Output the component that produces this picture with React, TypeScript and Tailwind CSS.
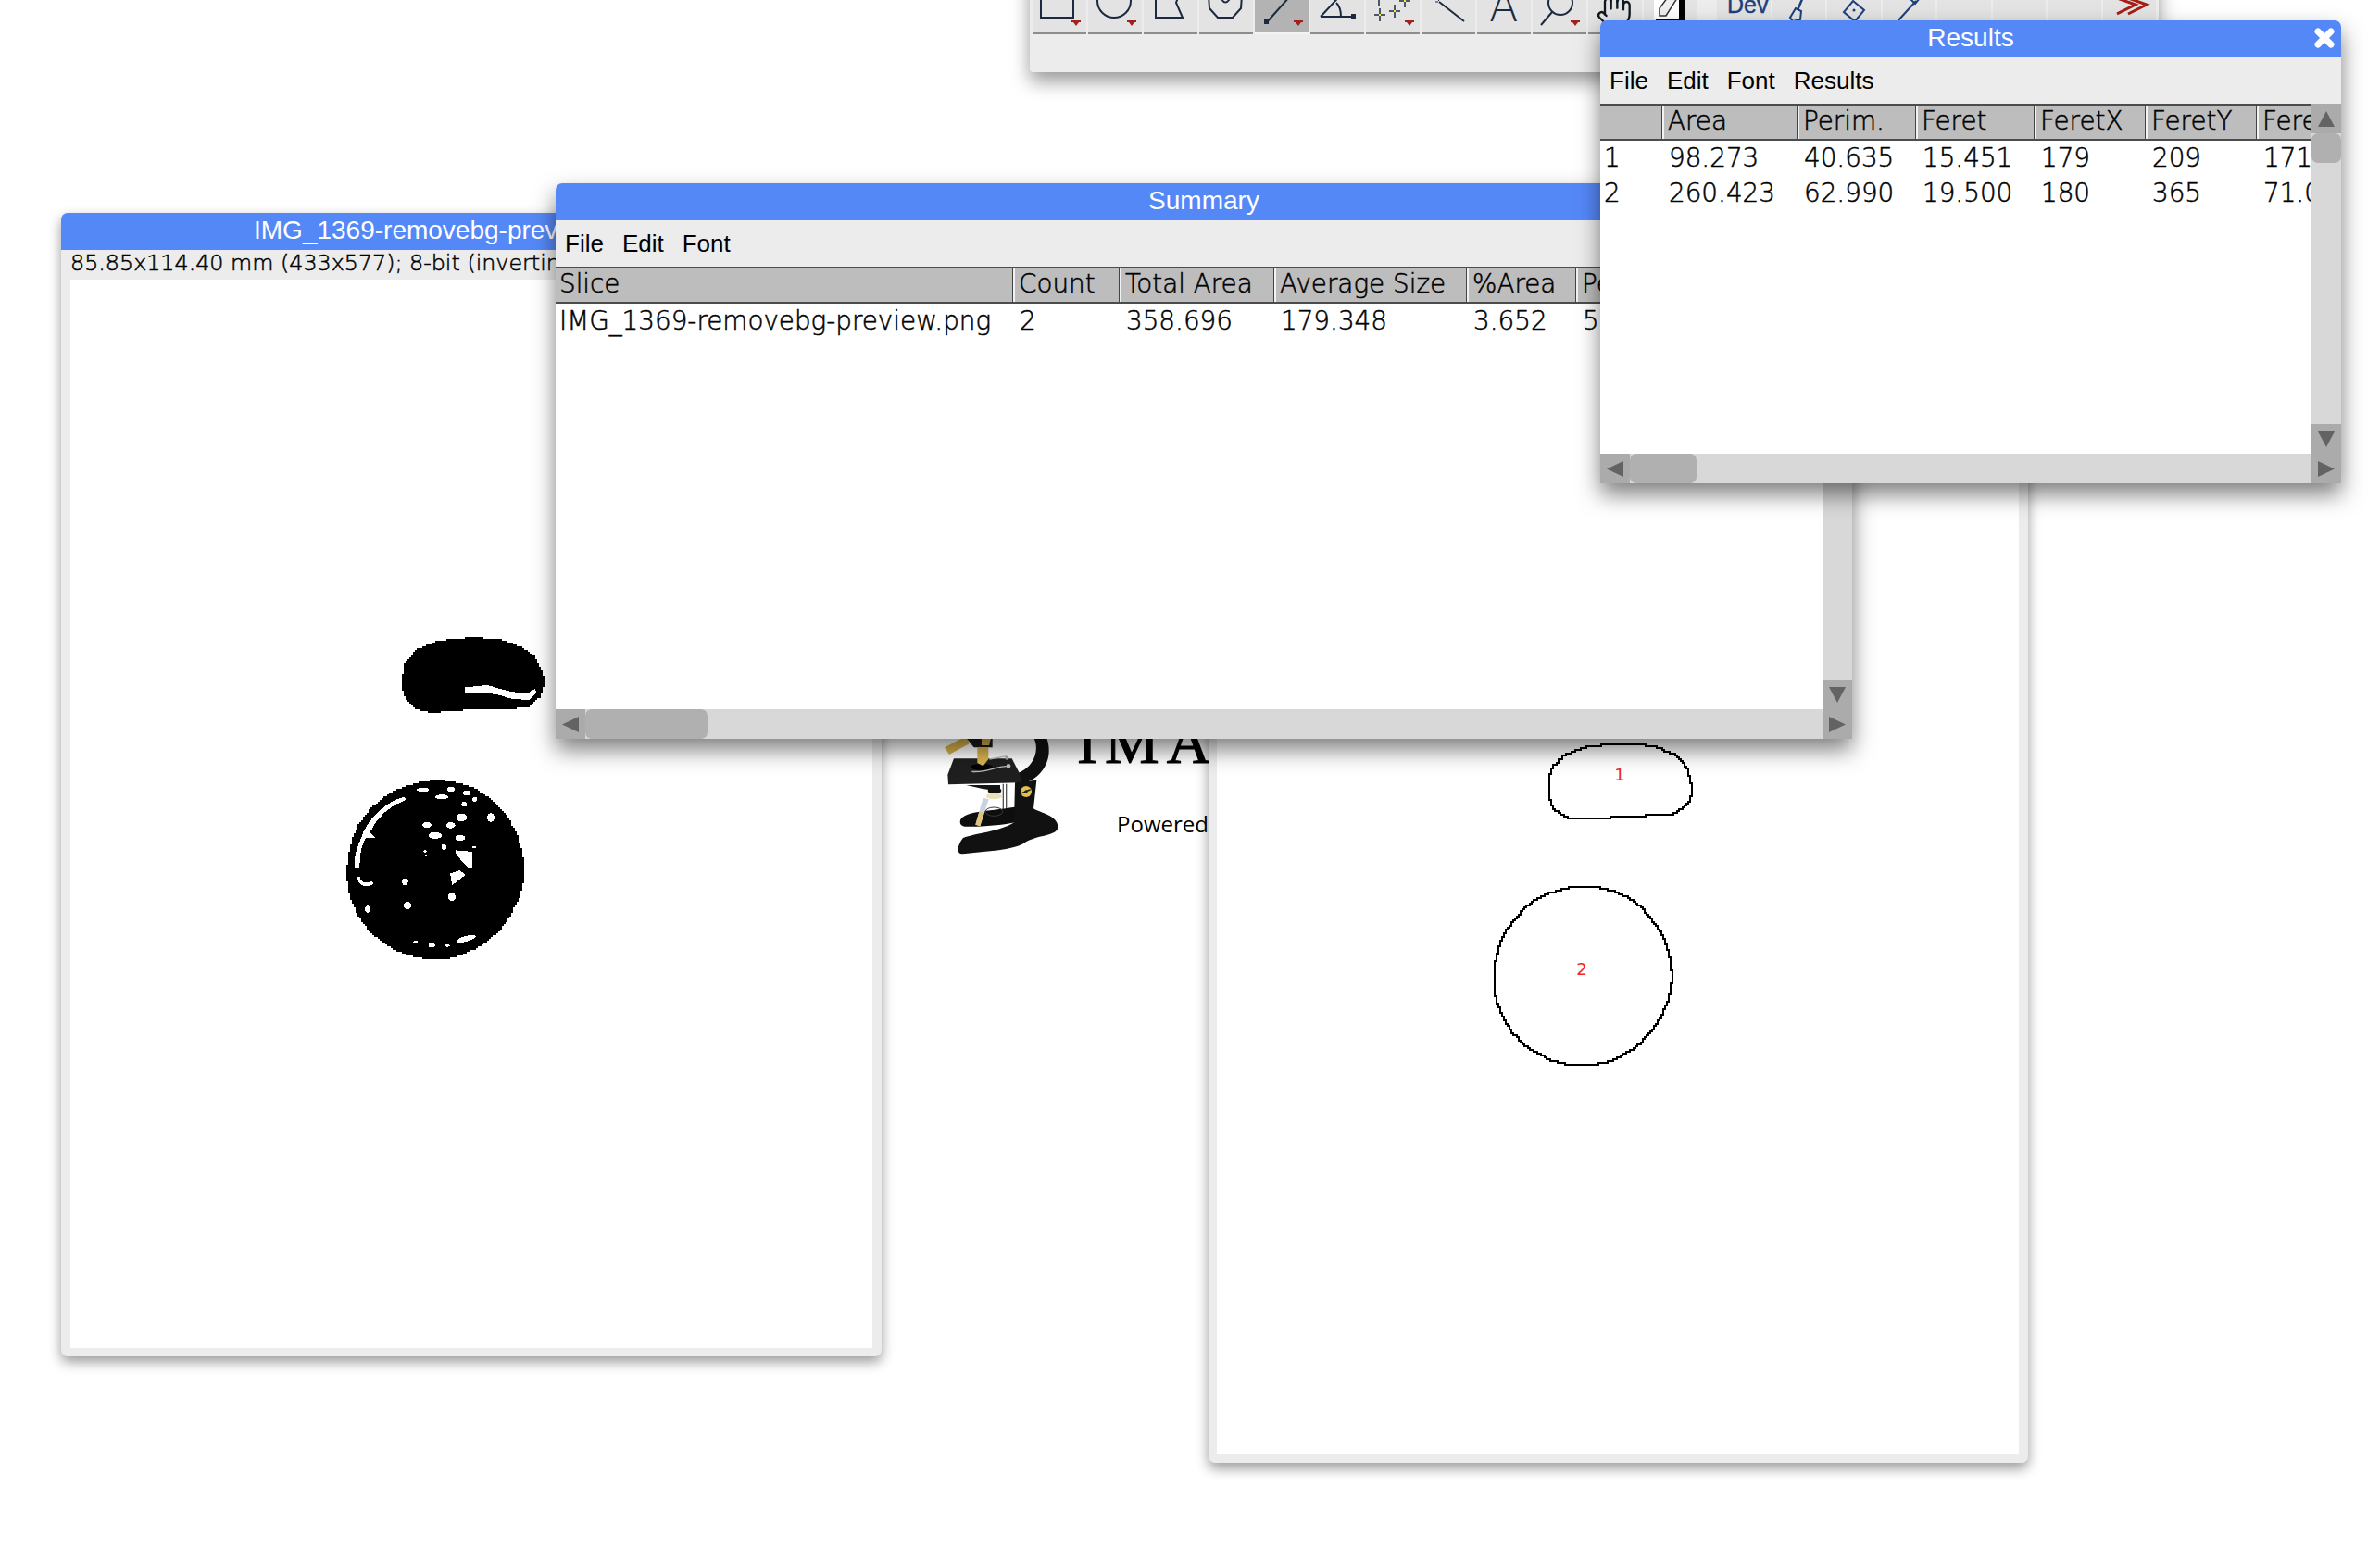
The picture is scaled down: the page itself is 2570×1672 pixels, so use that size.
import React from "react";
import { Hand } from "lucide-react";

const INK = "#1b2a40";
const NAVY = "#1c3f7c";

function RedArrow({ x }: { x: number }) {
  return <path d={`M${x - 5} 47h10v2l-2 0-3 4-3-4-2 0z`} fill="#a32020" />;
}

function Cross({ x, y }: { x: number; y: number }) {
  return (
    <g>
      <path d={`M${x - 6} ${y}h12M${x} ${y - 7}v14`} stroke={INK} strokeWidth="1.5" fill="none" />
      <rect x={x - 1} y={y - 1} width="2" height="2" fill="#f5f020" />
    </g>
  );
}

const icons: React.ReactNode[] = [
  <g key="r"><rect x="9" y="14" width="35" height="30" stroke={INK} strokeWidth="2" fill="none" /><RedArrow x={47} /></g>,
  <g key="o"><circle cx="28" cy="26" r="18" stroke={INK} strokeWidth="2" fill="none" /><RedArrow x={47} /></g>,
  <path key="p" d="M13 12L13 44L42 44L35 28L40 14" stroke={INK} strokeWidth="2" fill="none" />,
  <path key="f" d="M10 20L11 34L20 44L36 44L45 34L46 20M23 22Q28 33 34 22" stroke={INK} strokeWidth="2" fill="none" />,
  <g key="l"><path d="M13 49L46 12" stroke={INK} strokeWidth="2" fill="none" /><rect x="10" y="46" width="5" height="5" fill={INK} /><RedArrow x={47} /></g>,
  <g key="a"><path d="M11 43L47 43M11 43L38 14M28 28Q33 33 33 43" stroke={INK} strokeWidth="2" fill="none" /><rect x="44" y="40" width="5" height="5" fill={INK} /></g>,
  <g key="pt"><Cross x={15} y={41} /><Cross x={31} y={37} /><Cross x={42} y={26} /><Cross x={14} y={24} /><RedArrow x={47} /></g>,
  <g key="w"><path d="M19 27L46 48" stroke={INK} strokeWidth="2" fill="none" /><path d="M17 24l2 2M20 22l1 3M15 27l3 0" stroke={INK} strokeWidth="1" fill="none" /></g>,
  <text key="t" x="13" y="48" fontSize="46" fill={INK} fontFamily="'DejaVu Sans', sans-serif" fontWeight="200">A</text>,
  <g key="m"><circle cx="30" cy="28" r="13" stroke={INK} strokeWidth="2" fill="none" /><path d="M21 38L9 52" stroke={INK} strokeWidth="2" fill="none" /><RedArrow x={46} /></g>,
  <foreignObject key="h" x="8" y="17" width="42" height="42"><Hand size={40} strokeWidth={1.4} color="#101820" /></foreignObject>,
  <g key="c"><rect x="11" y="10" width="27" height="36" fill="#fff" /><path d="M38 8h6v40H13v-2h25z" fill="#000" /><path d="M17 42L17 34L32 14L38 20L24 42Z" stroke="#333" strokeWidth="1.5" fill="#eee" /></g>,
];

const icons2: React.ReactNode[] = [
  <text key="d" x="11" y="39" fontSize="25" stroke={NAVY} strokeWidth="0.4" fill={NAVY} fontFamily="'Liberation Sans', sans-serif">Dev</text>,
  <g key="b"><path d="M38 10L27 36" stroke={NAVY} strokeWidth="2.5" fill="none" /><path d="M25 34l6 3 -1 9 -8 2 -3-4 z" fill="none" stroke={NAVY} strokeWidth="2" /></g>,
  <g key="pn"><path d="M28 26L40 36L30 48L18 38Z" stroke={NAVY} strokeWidth="2" fill="none" /><circle cx="29" cy="36" r="1.5" fill={NAVY} /></g>,
  <g key="dp"><path d="M16 48L36 26" stroke={NAVY} strokeWidth="2" fill="none" /><path d="M35 18l5 5-5 6-5-5z" stroke={NAVY} strokeWidth="2" fill="none" /></g>,
  null,
  null,
  null,
  <path key="ch" d="M15 23L35 30L15 40M27 23L47 30L27 40" stroke="#a32018" strokeWidth="3" fill="none" />,
];

function ToolButton({ icon, active, narrow }: { icon: React.ReactNode; active?: boolean; narrow?: boolean }) {
  return (
    <div
      className={`h-[62px] shrink-0 border-b-2 ${narrow ? "w-[57.5px]" : "w-[58px]"} ${
        active ? "bg-[#b3b3b3] border-[#f4f4f4]" : "bg-[#e3e3e3] border-[#8d8d8d]"
      }`}
    >
      <svg width="58" height="60" viewBox="0 0 58 60">
        {icon}
      </svg>
    </div>
  );
}

function Toolbar() {
  return (
    <div className="absolute left-[1112px] top-[-30px] w-[1219px] h-[108px] bg-[#ececec] rounded-b-[4px] shadow-[0_10px_20px_rgba(0,0,0,0.4)] pl-[3px] pt-[5px] flex">
      <div className="flex gap-[2px]">
        {icons.map((ic, i) => (
          <ToolButton key={i} icon={ic} active={i === 4} />
        ))}
      </div>
      <div className="flex gap-[2px] ml-[21px]">
        {icons2.map((ic, i) => (
          <ToolButton key={i} icon={ic} narrow />
        ))}
      </div>
    </div>
  );
}

function TitleBar({ children, close }: { children: React.ReactNode; close?: boolean }) {
  return (
    <div className="relative h-[40px] shrink-0 pb-[3px] bg-[#5588f7] rounded-t-[7px] flex items-center justify-center text-white text-[28px] leading-none font-['Liberation_Sans',sans-serif] whitespace-nowrap overflow-hidden">
      {children}
      {close && (
        <svg className="absolute right-[7px] top-[8px]" width="22" height="22" viewBox="0 0 22 22">
          <path d="M4 4L18 18M18 4L4 18" stroke="#fff" strokeWidth="7" strokeLinecap="round" />
        </svg>
      )}
    </div>
  );
}

function Menu({ items, pad }: { items: string[]; pad: string }) {
  return (
    <div className={`h-[50px] shrink-0 bg-[#ececec] flex items-center gap-[20px] text-[26px] text-black font-['Liberation_Sans',sans-serif] ${pad}`}>
      {items.map((m) => (
        <span key={m}>{m}</span>
      ))}
    </div>
  );
}

function Tri({ dir }: { dir: "up" | "down" | "left" | "right" }) {
  const d = {
    up: "M9 0L18 17H0Z",
    down: "M0 0H18L9 17Z",
    left: "M18 0V17L0 8.5Z",
    right: "M0 0V17L18 8.5Z",
  }[dir];
  return (
    <svg width="18" height="17" viewBox="0 0 18 17">
      <path d={d} fill="#636363" />
    </svg>
  );
}

function ScrollBtn({ dir }: { dir: "up" | "down" | "left" | "right" }) {
  return (
    <div className="w-[32px] h-[32px] shrink-0 bg-[#ababab] flex items-center justify-center">
      <Tri dir={dir} />
    </div>
  );
}

type Col = { w: number; head: string; cells: string[] };

function Table({ cols }: { cols: Col[] }) {
  const rows = cols[0].cells.length;
  return (
    <div className="flex-1 min-w-0 overflow-hidden bg-white font-['DejaVu_Sans',sans-serif] font-extralight [-webkit-text-stroke:0.5px_black] text-[27.8px] text-black leading-[38px] whitespace-nowrap">
      <div className="flex h-[40px] border-y-2 border-[#4c4c4c] bg-[#bdbdbd] w-max items-center">
        {cols.map((c, i) => (
          <div
            key={i}
            style={{ width: c.w }}
            className="h-full shrink-0 overflow-hidden pl-[4px] border-r-2 border-r-[#f2f2f2] shadow-[inset_-1px_0_0_#444] leading-[33px]"
          >
            {c.head}
          </div>
        ))}
      </div>
      {Array.from({ length: rows }).map((_, r) => (
        <div key={r} className="flex w-max">
          {cols.map((c, i) => (
            <div key={i} style={{ width: c.w }} className={`shrink-0 h-[38px] ${i === 0 ? "pl-[4px]" : "pl-[5px]"}`}>
              {c.cells[r]}
            </div>
          ))}
        </div>
      ))}
    </div>
  );
}

function TableWindow({
  className,
  title,
  menu,
  menuPad,
  cols,
  close,
  thumbW,
  thumbY,
}: {
  className: string;
  title: string;
  menu: string[];
  menuPad: string;
  cols: Col[];
  close?: boolean;
  thumbW: number;
  thumbY?: boolean;
}) {
  return (
    <div className={`absolute flex flex-col rounded-t-[7px] shadow-[0_12px_24px_rgba(0,0,0,0.5)] ${className}`}>
      <TitleBar close={close}>{title}</TitleBar>
      <Menu items={menu} pad={menuPad} />
      <div className="flex flex-1 min-h-0">
        <Table cols={cols} />
        <div className="w-[32px] shrink-0 bg-[#d8d8d8] flex flex-col">
          <ScrollBtn dir="up" />
          {thumbY && <div className="w-[32px] h-[32px] bg-[#b0b0b0] rounded-[7px] shrink-0" />}
          <div className="flex-1" />
          <ScrollBtn dir="down" />
        </div>
      </div>
      <div className="flex h-[32px] shrink-0 bg-[#d8d8d8]">
        <ScrollBtn dir="left" />
        <div style={{ width: thumbW }} className="h-[32px] bg-[#b0b0b0] rounded-[7px]" />
        <div className="flex-1" />
        <ScrollBtn dir="right" />
      </div>
    </div>
  );
}

/* turns a closed outline into a stair-stepped one, on a grid of `g` units */
function stepped(pts: [number, number][], g: number) {
  const q = (v: number) => Math.round(v / g) * g;
  let px = q(pts[0][0]);
  let py = q(pts[0][1]);
  let d = `M${px} ${py}`;
  for (let i = 1; i < pts.length; i++) {
    const x = q(pts[i][0]);
    const y = q(pts[i][1]);
    if (x !== px) d += `H${x}`;
    if (y !== py) d += `V${y}`;
    px = x;
    py = y;
  }
  return d + "Z";
}

function wobble(cx: number, cy: number, rx: number, ry: number, amt: number) {
  const pts: [number, number][] = [];
  for (let i = 0; i < 240; i++) {
    const a = (i / 240) * Math.PI * 2;
    const r = 1 + amt * (Math.sin(a * 5 + 1) * 0.6 + Math.sin(a * 11) * 0.4);
    pts.push([cx + rx * r * Math.cos(a), cy + ry * r * Math.sin(a)]);
  }
  return pts;
}

function dense(one: [number, number][]) {
  const out: [number, number][] = [];
  one.forEach((p, i) => {
    if (i === 0) return;
    const a = one[i - 1];
    for (let t = 0; t < 8; t++) out.push([a[0] + ((p[0] - a[0]) * t) / 8, a[1] + ((p[1] - a[1]) * t) / 8]);
  });
  return out;
}

function BinaryImage() {
  const spots: [number, number, number, number][] = [
    [330, 572, 40, 14], [428, 570, 26, 16], [480, 582, 24, 16], [390, 595, 42, 15], [510, 602, 16, 16],
    [475, 618, 18, 16], [458, 656, 34, 26], [558, 655, 24, 28], [348, 684, 30, 18], [425, 684, 30, 20],
    [368, 716, 44, 22], [455, 726, 32, 18], [410, 755, 16, 18], [510, 762, 14, 6], [352, 775, 10, 8],
    [352, 788, 14, 6], [282, 866, 20, 22], [432, 912, 24, 28], [288, 942, 24, 24], [162, 955, 18, 22],
    [318, 1068, 16, 8], [368, 1076, 22, 14], [420, 1080, 18, 8],
  ];
  const bean: [number, number][] = [
    [282, 215], [290, 170], [325, 125], [385, 100], [440, 90], [510, 85], [600, 92], [665, 115], [712, 150],
    [738, 195], [744, 240], [730, 280], [695, 312], [640, 316], [500, 318], [450, 326], [370, 328], [325, 315],
    [295, 285], [282, 250], [282, 215],
  ];
  return (
    <svg width="866" height="1154" viewBox="0 0 866 1154" className="block">
      <g transform="translate(264 358) scale(0.33333)" shapeRendering="crispEdges">
        <path d={stepped(dense(bean), 6)} fill="#000" />
        <path d="M487 247L560 240L600 252L640 262L690 265L715 252L716 265L695 288L640 285L590 270L540 265L487 263Z" fill="#fff" />
        <path d={stepped(wobble(390, 838, 287, 290, 0.006), 6)} fill="#000" />
        <path d="M290 602C230 615 165 680 150 735C135 770 125 800 128 832L145 832C145 790 150 760 165 735L195 735L178 718C200 670 240 630 295 612Z" fill="#fff" />
        <path d="M135 860C140 890 165 900 190 885L185 875C165 885 150 880 145 860Z" fill="#fff" />
        {spots.map(([x, y, w, h], i) => (
          <ellipse key={i} cx={x + w / 2} cy={y + h / 2} rx={w / 2} ry={h / 2} fill="#fff" />
        ))}
        <path d="M456 775L510 780L510 830L495 830L458 790Z" fill="#fff" />
        <path d="M438 850L470 840L488 855L445 888Z" fill="#fff" />
        <ellipse cx="490" cy="1062" rx="32" ry="9" transform="rotate(-15 490 1062)" fill="#fff" />
      </g>
    </svg>
  );
}

function OutlineImage() {
  const one: [number, number][] = [
    [278, 345], [290, 320], [325, 285], [385, 262], [475, 250], [555, 250], [625, 262], [690, 292],
    [725, 335], [740, 400], [730, 440], [680, 482], [495, 484], [460, 492], [360, 494], [330, 488],
    [295, 465], [278, 430], [278, 345],
  ];
  return (
    <svg width="866" height="1154" viewBox="0 0 866 1154" className="block">
      <g transform="translate(266 304) scale(0.33333)" shapeRendering="crispEdges">
        <path d={stepped(dense(one), 6)} transform="translate(3 0)" fill="none" stroke="#000" strokeWidth="6" />
        <path d={stepped(wobble(387, 1002, 288, 290, 0.005), 6)} fill="none" stroke="#000" strokeWidth="6" />
      </g>
      <text x="435" y="427" fontSize="18" fill="#ee2a2a" textAnchor="middle" fontFamily="'DejaVu Sans', sans-serif">1</text>
      <text x="394" y="637" fontSize="18" fill="#ee2a2a" textAnchor="middle" fontFamily="'DejaVu Sans', sans-serif">2</text>
    </svg>
  );
}

function Microscope() {
  return (
    <svg width="340" height="220" viewBox="0 0 1020 660" className="block">
      <path d="M120 262L190 225L200 250L135 285Z" fill="#d8b24a" />
      <path d="M185 225H275V262H215Z" fill="#1a1a1a" />
      <path d="M240 225H272L264 255H240Z" fill="#d8b24a" />
      <path d="M405 225C428 255 420 320 358 345L365 378C420 375 460 320 458 270C458 255 455 240 448 225Z" fill="#111" />
      <path d="M150 298H338L365 350V376L132 382L130 350Z" fill="#1f1f1f" />
      <ellipse cx="240" cy="325" rx="36" ry="10" fill="#000" />
      <path d="M226 262H262L262 300L245 322L226 312Z" fill="#d9b550" />
      <path d="M265 300L322 290M208 340C260 345 280 322 332 322" stroke="#b9b9b9" strokeWidth="4" fill="none" />
      <circle cx="322" cy="296" r="6" fill="#aaa" />
      <circle cx="327" cy="322" r="7" fill="#bbb" />
      <path d="M190 384L300 384L300 405L240 395Z" fill="#141414" />
      <ellipse cx="282" cy="402" rx="22" ry="12" fill="#111" />
      <ellipse cx="280" cy="420" rx="26" ry="10" fill="#e8e0b8" />
      <path d="M310 380V478M320 380V478" stroke="#555" strokeWidth="4" />
      <path d="M172 495C190 468 250 470 348 455V505C300 515 230 520 185 518C170 515 168 505 172 495Z" fill="#0e0e0e" />
      <ellipse cx="280" cy="470" rx="28" ry="14" fill="none" stroke="#3a3a3a" strokeWidth="3" />
      <path d="M245 425L263 430L235 517L220 512Z" fill="#c9d3e0" />
      <path d="M232 470L248 475L235 517L220 512Z" fill="#dcc27a" />
      <path d="M348 376L418 368L408 460C430 475 485 480 488 520C485 550 420 545 380 570C350 595 240 600 175 607C158 605 160 580 180 555C220 540 300 535 345 505Z" fill="#111" />
      <circle cx="384" cy="405" r="18" fill="#e3bf4b" />
      <path d="M370 410L398 398" stroke="#222" strokeWidth="5" />
      <circle cx="384" cy="405" r="5" fill="#222" />
    </svg>
  );
}

export default function App() {
  const summaryCols: Col[] = [
    { w: 496, head: "Slice", cells: ["IMG_1369-removebg-preview.png"] },
    { w: 115, head: "Count", cells: ["2"] },
    { w: 167, head: "Total Area", cells: ["358.696"] },
    { w: 208, head: "Average Size", cells: ["179.348"] },
    { w: 118, head: "%Area", cells: ["3.652"] },
    { w: 120, head: "Perim.", cells: ["51.812"] },
  ];
  const resultCols: Col[] = [
    { w: 69, head: "", cells: ["1", "2"] },
    { w: 146, head: "Area", cells: ["98.273", "260.423"] },
    { w: 128, head: "Perim.", cells: ["40.635", "62.990"] },
    { w: 128, head: "Feret", cells: ["15.451", "19.500"] },
    { w: 120, head: "FeretX", cells: ["179", "180"] },
    { w: 120, head: "FeretY", cells: ["209", "365"] },
    { w: 120, head: "FeretAngle", cells: ["171.027", "71.075"] },
  ];

  return (
    <div className="relative w-[2570px] h-[1672px] overflow-hidden bg-white">
      <Toolbar />

      {/* splash behind the windows */}
      <div className="absolute left-[980px] top-[720px]">
        <Microscope />
      </div>
      <div className="absolute left-[1163px] top-[762px] text-[66px] leading-[80px] tracking-[8px] text-black [-webkit-text-stroke:1px_black] font-['Liberation_Serif',serif] whitespace-nowrap">
        IMAGEJ
      </div>
      <div className="absolute left-[1206px] top-[873px] text-[24px] leading-[34px] text-black font-['Open_Sans',sans-serif] whitespace-nowrap">
        Powered by
      </div>

      {/* binary image window */}
      <div className="absolute left-[66px] top-[230px] w-[886px] h-[1235px] bg-[#ececec] rounded-t-[7px] rounded-b-[7px] flex flex-col shadow-[0_6px_14px_rgba(0,0,0,0.4)]">
        <div className="h-[40px] shrink-0 pb-[3px] bg-[#5588f7] rounded-t-[7px] flex items-center pl-[208px] text-white text-[28px] leading-none font-['Liberation_Sans',sans-serif] whitespace-nowrap overflow-hidden">
          IMG_1369-removebg-preview.png (V)
        </div>
        <div className="h-[32px] shrink-0 pl-[10px] pb-[3px] flex items-center text-[23.8px] text-black font-extralight [-webkit-text-stroke:0.5px_black] font-['DejaVu_Sans',sans-serif] whitespace-nowrap overflow-hidden">
          85.85x114.40 mm (433x577); 8-bit (inverting LUT); 488K
        </div>
        <div className="px-[10px]">
          <div className="w-[866px] h-[1154px] bg-white">
            <BinaryImage />
          </div>
        </div>
      </div>

      {/* outline drawing window */}
      <div className="absolute left-[1305px] top-[346px] w-[885px] h-[1234px] bg-[#ececec] rounded-[7px] flex flex-col shadow-[0_6px_14px_rgba(0,0,0,0.4)]">
        <div className="h-[40px] shrink-0 bg-[#5588f7] rounded-t-[7px]" />
        <div className="h-[30px] shrink-0" />
        <div className="pl-[9px]">
          <div className="w-[866px] h-[1154px] bg-white">
            <OutlineImage />
          </div>
        </div>
      </div>

      <TableWindow
        className="left-[600px] top-[198px] w-[1400px] h-[600px]"
        title="Summary"
        menu={["File", "Edit", "Font"]}
        menuPad="pl-[10px]"
        cols={summaryCols}
        thumbW={132}
      />

      <TableWindow
        className="left-[1728px] top-[22px] w-[800px] h-[500px]"
        title="Results"
        menu={["File", "Edit", "Font", "Results"]}
        menuPad="pl-[10px]"
        cols={resultCols}
        close
        thumbW={72}
        thumbY
      />
    </div>
  );
}
